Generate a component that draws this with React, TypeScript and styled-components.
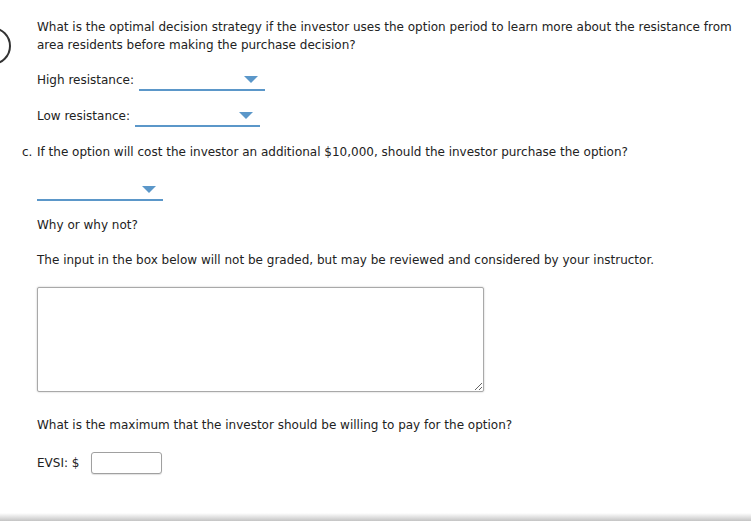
import React from "react";
import styled, { createGlobalStyle } from "styled-components";

const GlobalStyle = createGlobalStyle`
  html, body {
    margin: 0;
    padding: 0;
    background: #ffffff;
  }
  body {
    font-family: "DejaVu Sans", Verdana, sans-serif;
    font-size: 12px;
    color: #222222;
  }
`;

const Page = styled.div`
  position: relative;
  width: 751px;
  height: 527px;
  overflow: hidden;
  display: flex;
  flex-direction: column;
`;

const Content = styled.div`
  padding: 18px 0 0 37px;
  display: flex;
  flex-direction: column;
  align-items: flex-start;
`;

const Paragraph = styled.p<{ $top?: number }>`
  margin: ${(p) => p.$top ?? 0}px 0 0 0;
  line-height: 18px;
  max-width: 700px;
`;

const SubQuestion = styled.div<{ $top?: number }>`
  margin-top: ${(p) => p.$top ?? 0}px;
  display: flex;
  line-height: 18px;
`;

const Marker = styled.span`
  width: 15px;
  margin-left: -15px;
`;

const SelectRow = styled.div<{ $top?: number }>`
  margin-top: ${(p) => p.$top ?? 0}px;
  display: flex;
  align-items: flex-end;
  gap: 5px;
  line-height: 18px;
`;

const Label = styled.span`
  padding-bottom: 2px;
`;

const Select = styled.div<{ $width: number }>`
  position: relative;
  width: ${(p) => p.$width}px;
  height: 18px;
  border-bottom: 2px solid #5b97c9;
`;

const Arrow = styled.span`
  position: absolute;
  right: 7px;
  bottom: 6px;
  width: 0;
  height: 0;
  border-left: 7px solid transparent;
  border-right: 7px solid transparent;
  border-top: 7px solid #5b97c9;
`;

const TextArea = styled.textarea`
  margin-top: 18px;
  width: 447px;
  height: 105px;
  box-sizing: border-box;
  border: 1px solid #a9a9a9;
  border-radius: 2px;
  box-shadow: 0 0 2px rgba(0, 0, 0, 0.25);
  padding: 4px;
  font-family: inherit;
  font-size: 12px;
  background: #ffffff;
  outline: none;
`;

const InputRow = styled.div`
  margin-top: 18px;
  display: flex;
  align-items: center;
  gap: 12px;
`;

const NumberInput = styled.input`
  width: 71px;
  height: 22px;
  box-sizing: border-box;
  border: 1px solid #a0a0a0;
  border-radius: 3px;
  box-shadow: 0 1px 1px rgba(0, 0, 0, 0.12);
  padding: 2px 4px;
  font-family: inherit;
  font-size: 12px;
  outline: none;
`;

const Footer = styled.div`
  margin-top: auto;
  margin-bottom: 6px;
  height: 8px;
  background: linear-gradient(#ffffff, #c4c4c4);
`;

const SideMark = styled.svg`
  position: absolute;
  left: 0;
  top: 25px;
`;

function Dropdown({ width }: { width: number }) {
  return (
    <Select $width={width}>
      <Arrow />
    </Select>
  );
}

export default function App() {
  return (
    <>
      <GlobalStyle />
      <Page>
        <SideMark width="14" height="42" viewBox="0 0 14 42">
          <circle cx="-8" cy="21" r="18" fill="none" stroke="#333" strokeWidth="2" />
        </SideMark>
        <Content>
          <Paragraph>
            What is the optimal decision strategy if the investor uses the option period to learn more about the resistance from
            area residents before making the purchase decision?
          </Paragraph>
          <SelectRow $top={17}>
            <Label>High resistance:</Label>
            <Dropdown width={126} />
          </SelectRow>
          <SelectRow $top={16}>
            <Label>Low resistance:</Label>
            <Dropdown width={125} />
          </SelectRow>
          <SubQuestion $top={16}>
            <Marker>c.</Marker>
            <span>If the option will cost the investor an additional $10,000, should the investor purchase the option?</span>
          </SubQuestion>
          <SelectRow $top={20}>
            <Dropdown width={126} />
          </SelectRow>
          <Paragraph $top={15}>Why or why not?</Paragraph>
          <Paragraph $top={17}>
            The input in the box below will not be graded, but may be reviewed and considered by your instructor.
          </Paragraph>
          <TextArea />
          <Paragraph $top={24}>What is the maximum that the investor should be willing to pay for the option?</Paragraph>
          <InputRow>
            <span>EVSI: $</span>
            <NumberInput type="text" />
          </InputRow>
        </Content>
        <Footer />
      </Page>
    </>
  );
}
